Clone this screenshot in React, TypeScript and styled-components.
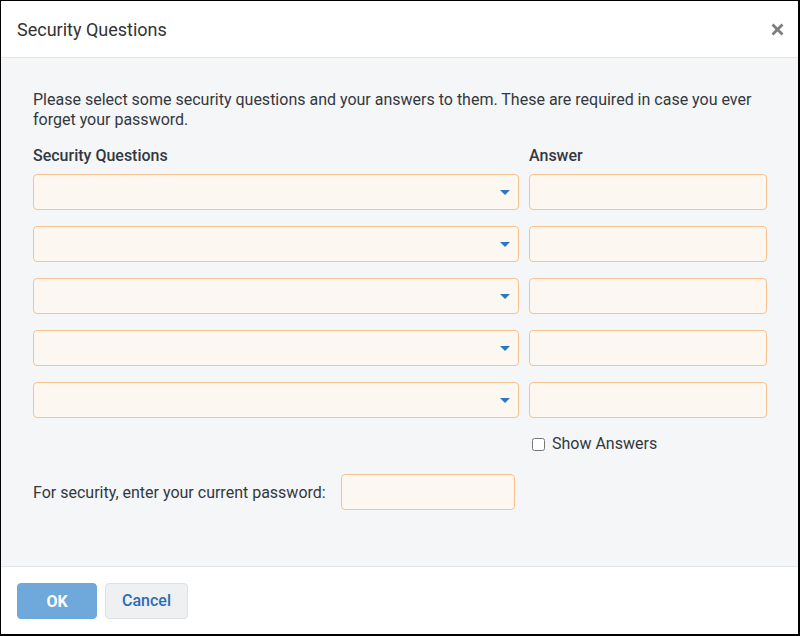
import * as React from 'react';
import styled, { createGlobalStyle } from 'styled-components';

const GlobalStyle = createGlobalStyle`
  html, body {
    margin: 0;
    padding: 0;
    background: #ffffff;
  }
  body {
    font-family: Roboto, "Liberation Sans", sans-serif;
    color: #333840;
  }
  * {
    box-sizing: border-box;
  }
`;

const ROWS = [0, 1, 2, 3, 4];

const App: React.FunctionComponent = (): React.ReactElement => (
  <React.Fragment>
    <GlobalStyle />
    <Dialog>
      <Header>
        <Title>Security Questions</Title>
        <CloseButton aria-label="Close">
          <svg width="13" height="13" viewBox="0 0 13 13">
            <path d="M1.5 1.5 L11.5 11.5 M11.5 1.5 L1.5 11.5" stroke="#7d7d7d" strokeWidth="2.8" strokeLinecap="butt" />
          </svg>
        </CloseButton>
      </Header>
      <Body>
        <Intro>
          Please select some security questions and your answers to them. These are required in case you ever
          forget your password.
        </Intro>
        <QuestionGrid>
          <ColumnLabel>Security Questions</ColumnLabel>
          <ColumnLabel>Answer</ColumnLabel>
          {ROWS.map((row) => (
            <React.Fragment key={row}>
              <SelectBox>
                <Caret />
              </SelectBox>
              <TextInput type="password" />
            </React.Fragment>
          ))}
          <span />
          <CheckRow>
            <Checkbox type="checkbox" />
            <span>Show Answers</span>
          </CheckRow>
        </QuestionGrid>
        <PasswordRow>
          <span>For security, enter your current password:</span>
          <PasswordInput type="password" />
        </PasswordRow>
      </Body>
      <Footer>
        <PrimaryButton>OK</PrimaryButton>
        <SecondaryButton>Cancel</SecondaryButton>
      </Footer>
    </Dialog>
  </React.Fragment>
);

export default App;

// Styled components

const Dialog = styled('div')`
  display: flex;
  flex-direction: column;
  width: 800px;
  height: 636px;
  border-style: solid;
  border-color: #000000;
  border-width: 1px 2px 2px 1px;
  background: #ffffff;
  overflow: hidden;
`;

const Header = styled('div')`
  align-items: center;
  border-bottom: 1px solid #e1e4e8;
  display: flex;
  flex-shrink: 0;
  height: 57px;
  justify-content: space-between;
  padding: 0 10px 0 16px;
`;

const Title = styled('h1')`
  color: #333333;
  font-size: 18px;
  font-weight: 400;
  margin: 0;
`;

const CloseButton = styled('button')`
  background: none;
  border: none;
  cursor: pointer;
  display: flex;
  padding: 4px;
`;

const Body = styled('div')`
  background: #f5f6f8;
  flex: 1;
  padding: 32px 31px 0 32px;
`;

const Intro = styled('p')`
  font-size: 16px;
  line-height: 20px;
  margin: 0 0 15px;
`;

const QuestionGrid = styled('div')`
  display: grid;
  grid-template-columns: 1fr 238px;
  column-gap: 10px;
  row-gap: 16px;
`;

const ColumnLabel = styled('div')`
  font-size: 16px;
  font-weight: 500;
  line-height: 20px;
  margin: 1px 0 -8px;
`;

const SelectBox = styled('div')`
  align-items: center;
  background: #fcf7f1;
  border: 1px solid #f8c28e;
  border-radius: 4px;
  display: flex;
  height: 36px;
  justify-content: flex-end;
  padding-right: 8px;
`;

const Caret = styled('span')`
  border-left: 5px solid transparent;
  border-right: 5px solid transparent;
  border-top: 5px solid #2a78c4;
  height: 0;
  width: 0;
`;

const TextInput = styled('input')`
  background: #fcf7f1;
  border: 1px solid #f8c28e;
  border-radius: 4px;
  height: 36px;
  outline: none;
  width: 100%;
`;

const CheckRow = styled('label')`
  align-items: center;
  display: flex;
  font-size: 16px;
  line-height: 20px;
`;

const Checkbox = styled('input')`
  height: 13px;
  margin: 0 7px 0 3px;
  width: 13px;
`;

const PasswordRow = styled('div')`
  align-items: center;
  display: flex;
  font-size: 16px;
  gap: 15px;
  margin-top: 20px;
`;

const PasswordInput = styled(TextInput)`
  width: 174px;
`;

const Footer = styled('div')`
  border-top: 1px solid #e1e4e8;
  display: flex;
  flex-shrink: 0;
  gap: 8px;
  height: 68px;
  padding: 16px 16px 0;
`;

const PrimaryButton = styled('button')`
  background: #6fa8da;
  border: 1px solid #6fa8da;
  border-radius: 4px;
  color: #ffffff;
  font-family: Roboto, "Liberation Sans", sans-serif;
  font-size: 16px;
  font-weight: 700;
  height: 36px;
  width: 80px;
`;

const SecondaryButton = styled('button')`
  background: #eef0f2;
  border: 1px solid #dde1e5;
  border-radius: 4px;
  color: #2c6db5;
  font-family: Roboto, "Liberation Sans", sans-serif;
  font-size: 16px;
  font-weight: 500;
  height: 36px;
  width: 83px;
  padding-bottom: 2px;
`;
